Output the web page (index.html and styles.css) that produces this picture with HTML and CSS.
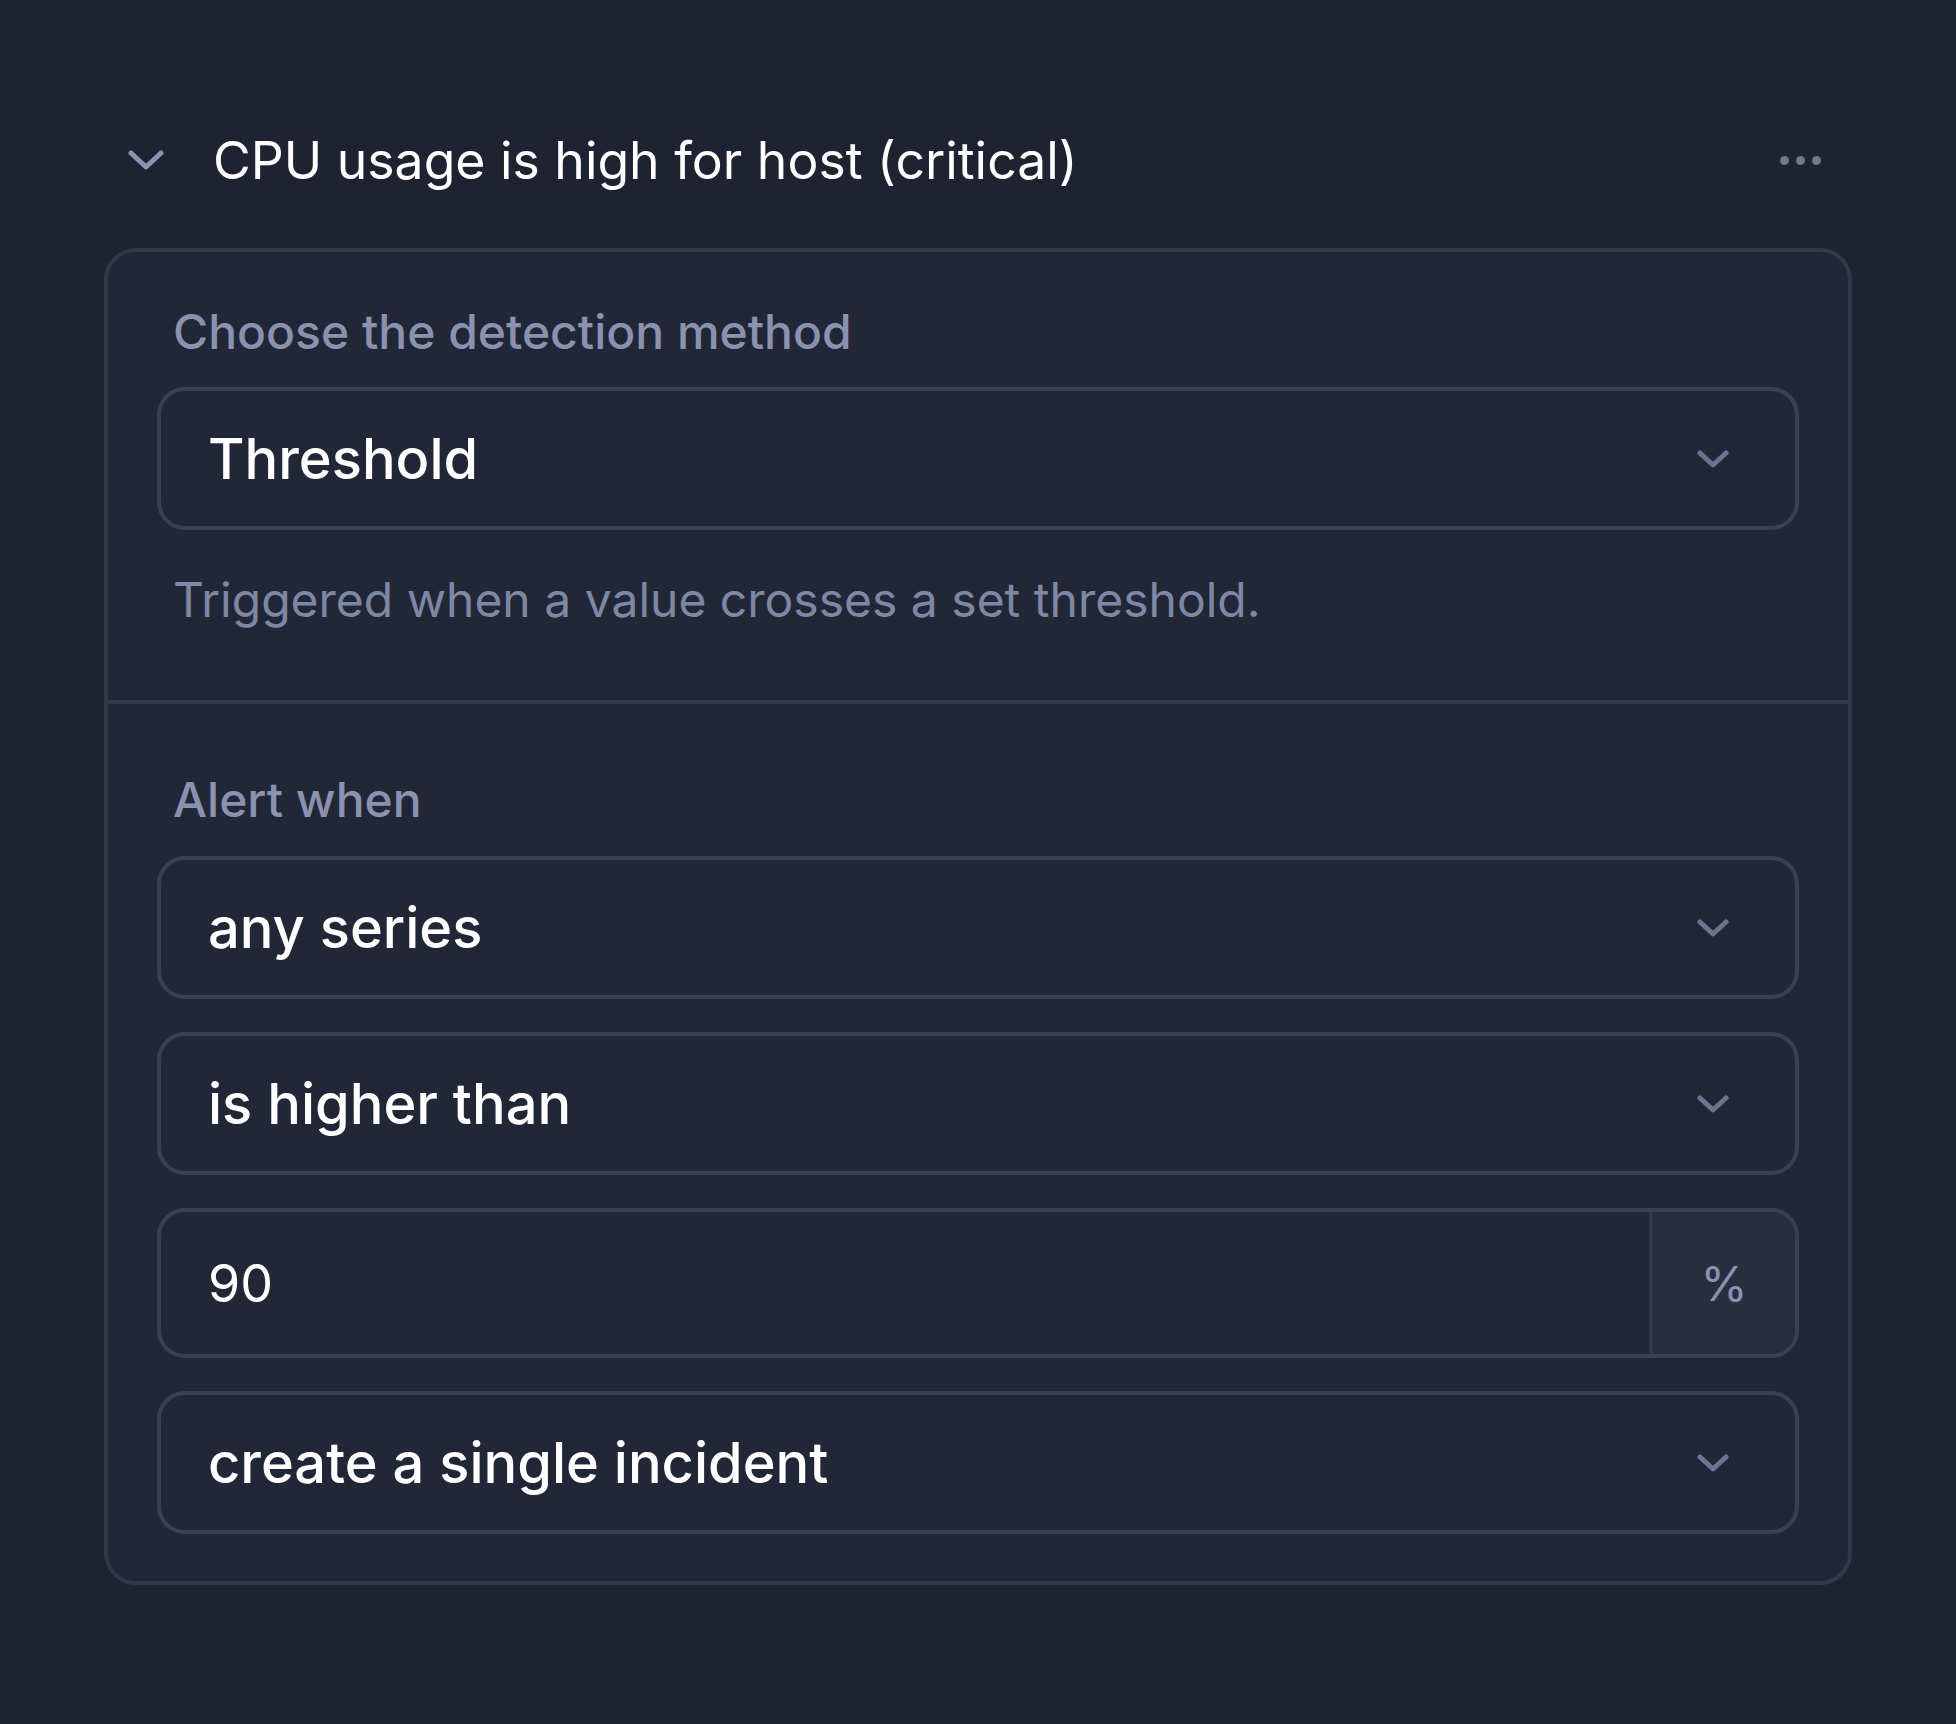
FILE: index.html
```html
<!DOCTYPE html>
<html lang="en">
<head>
    <meta charset="UTF-8">
    <meta name="viewport" content="width=device-width, initial-scale=1.0">
    <title>Alert condition</title>
    <link rel="stylesheet" href="styles.css">
</head>
<body>
    <div class="page">
        <header class="rule-head">
            <svg class="toggle" width="36" height="20" viewBox="0 0 36 20">
                <path d="M3 3 L18 17 L33 3" fill="none" stroke="#8a92af" stroke-width="5" stroke-linecap="round" stroke-linejoin="round"/>
            </svg>
            <h1 class="rule-title">CPU usage is high for host (critical)</h1>
            <div class="more">
                <span></span><span></span><span></span>
            </div>
        </header>

        <div class="card">
            <section class="section top">
                <div class="label">Choose the detection method</div>
                <div class="select">
                    <span>Threshold</span>
                    <svg class="caret" width="32" height="18" viewBox="0 0 32 18">
                        <path d="M3 3 L16 15 L29 3" fill="none" stroke="#6c7491" stroke-width="5" stroke-linecap="round" stroke-linejoin="round"/>
                    </svg>
                </div>
                <p class="hint">Triggered when a value crosses a set threshold.</p>
            </section>

            <section class="section">
                <div class="label">Alert when</div>
                <div class="fields">
                    <div class="select">
                        <span>any series</span>
                        <svg class="caret" width="32" height="18" viewBox="0 0 32 18">
                            <path d="M3 3 L16 15 L29 3" fill="none" stroke="#6c7491" stroke-width="5" stroke-linecap="round" stroke-linejoin="round"/>
                        </svg>
                    </div>
                    <div class="select">
                        <span>is higher than</span>
                        <svg class="caret" width="32" height="18" viewBox="0 0 32 18">
                            <path d="M3 3 L16 15 L29 3" fill="none" stroke="#6c7491" stroke-width="5" stroke-linecap="round" stroke-linejoin="round"/>
                        </svg>
                    </div>
                    <div class="number">
                        <span class="value">90</span>
                        <span class="unit">%</span>
                    </div>
                    <div class="select">
                        <span>create a single incident</span>
                        <svg class="caret" width="32" height="18" viewBox="0 0 32 18">
                            <path d="M3 3 L16 15 L29 3" fill="none" stroke="#6c7491" stroke-width="5" stroke-linecap="round" stroke-linejoin="round"/>
                        </svg>
                    </div>
                </div>
            </section>
        </div>
    </div>
</body>
</html>
```

FILE: styles.css
```css
body {
    margin: 0;
    background: #1f2331;
    font-family: Inter, "Noto Sans", sans-serif;
    color: #ffffff;
}

.page {
    padding: 120px 104px 0;
}

.rule-head {
    display: flex;
    align-items: center;
    height: 80px;
    padding: 0 31px 0 24px;
    margin-bottom: 48px;
}

.toggle {
    flex: none;
    margin-right: 49px;
}

.rule-title {
    flex: 1;
    margin: 0;
    font-size: 51.7px;
    font-weight: 400;
    line-height: 80px;
    color: #ffffff;
}

.more {
    display: flex;
    gap: 7px;
}

.more span {
    width: 9px;
    height: 9px;
    border-radius: 50%;
    background: #6f7792;
}

.card {
    background: #222738;
    border: 4px solid #323849;
    border-radius: 32px;
}

.section {
    padding: 52px 49px 47px;
}

.section.top {
    padding-bottom: 72px;
    border-bottom: 4px solid #323849;
}

.section + .section {
    padding-top: 68px;
}

.label {
    padding-left: 16px;
    margin-bottom: 27px;
    font-size: 48px;
    font-weight: 500;
    line-height: 56px;
    color: #8a92af;
}

.section + .section .label {
    margin-bottom: 28px;
}

.hint {
    margin: 42px 0 0;
    padding-left: 16px;
    font-size: 48px;
    line-height: 56px;
    color: #7e87a4;
}

.fields {
    display: flex;
    flex-direction: column;
    gap: 33px;
}

.select {
    display: flex;
    align-items: center;
    justify-content: space-between;
    height: 135px;
    padding: 0 66px 0 47px;
    border: 4px solid #3a4054;
    border-radius: 28px;
    background: #222738;
    font-size: 56px;
    font-weight: 500;
    color: #ffffff;
}

.caret {
    flex: none;
}

.number {
    display: flex;
    height: 142px;
    border: 4px solid #3a4054;
    border-radius: 28px;
    overflow: hidden;
}

.number .value {
    flex: 1;
    display: flex;
    align-items: center;
    padding-left: 47px;
    font-size: 52px;
    color: #ffffff;
}

.number .unit {
    flex: none;
    width: 142px;
    display: flex;
    align-items: center;
    justify-content: center;
    border-left: 4px solid #323849;
    background: #292e3f;
    font-size: 48px;
    color: #8a92af;
}
```
